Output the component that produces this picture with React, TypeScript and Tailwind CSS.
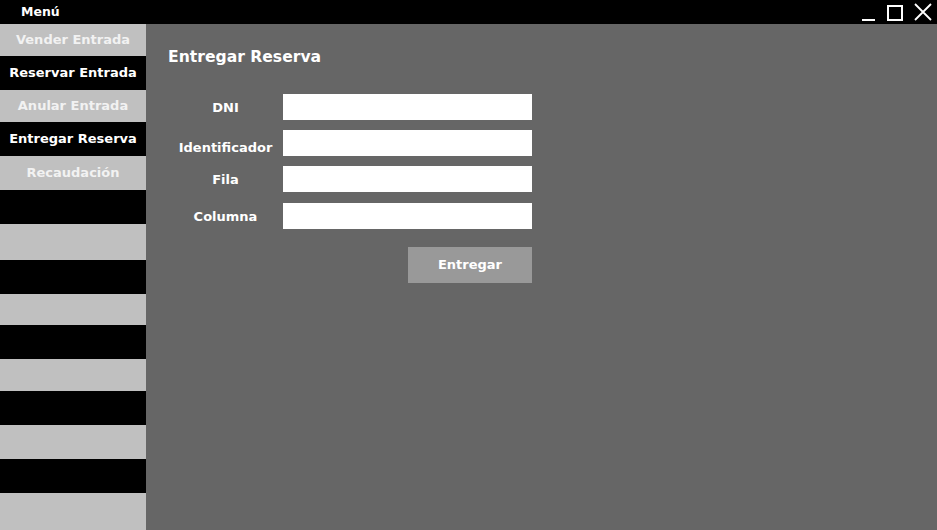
import React from "react";

const MENU = [
  { label: "Vender Entrada", h: "h-[32px]", dark: false },
  { label: "Reservar Entrada", h: "h-[34px]", dark: true },
  { label: "Anular Entrada", h: "h-[32px]", dark: false },
  { label: "Entregar Reserva", h: "h-[34px]", dark: true },
  { label: "Recaudación", h: "h-[34px]", dark: false },
  { label: "", h: "h-[34px]", dark: true },
  { label: "", h: "h-[36px]", dark: false },
  { label: "", h: "h-[34px]", dark: true },
  { label: "", h: "h-[31px]", dark: false },
  { label: "", h: "h-[34px]", dark: true },
  { label: "", h: "h-[32px]", dark: false },
  { label: "", h: "h-[34px]", dark: true },
  { label: "", h: "h-[34px]", dark: false },
  { label: "", h: "h-[34px]", dark: true },
];

const FIELDS = [
  { label: "DNI", gap: "mt-0", lbl: "translate-y-[1px]" },
  { label: "Identificador", gap: "mt-[10px]", lbl: "translate-y-[5px]" },
  { label: "Fila", gap: "mt-[10px]", lbl: "translate-y-[1px]" },
  { label: "Columna", gap: "mt-[11px]", lbl: "translate-y-[1px]" },
];

export default function App() {
  return (
    <div
      className="flex h-[530px] w-[937px] flex-col overflow-hidden bg-[#666666] text-white"
      style={{ fontFamily: '"DejaVu Sans", Verdana, sans-serif' }}
    >
      {/* title bar */}
      <div className="flex h-[24px] shrink-0 items-center bg-black">
        <span className="ml-[21px] text-[12.5px] font-bold">Menú</span>
        <div className="ml-auto flex items-center">
          <svg width="16" height="20" viewBox="0 0 16 20" className="mr-[11px]">
            <rect x="2" y="17" width="13" height="2" fill="white" />
          </svg>
          <svg width="16" height="18" viewBox="0 0 16 18" className="mr-[10px]">
            <rect x="1" y="3" width="14" height="14" fill="none" stroke="white" strokeWidth="2" />
          </svg>
          <svg width="20" height="20" viewBox="0 0 20 20" className="mr-[4px]">
            <path d="M2 2 L18 18 M18 2 L2 18" stroke="white" strokeWidth="1.8" />
          </svg>
        </div>
      </div>

      <div className="flex flex-1">
        {/* sidebar */}
        <div className="flex w-[146px] shrink-0 flex-col">
          {MENU.map((item, i) => (
            <div
              key={i}
              className={`flex ${item.h} items-center justify-center text-[13px] font-bold ${
                item.dark ? "bg-black text-white" : "bg-[#c0c0c0] text-[#f2f2f2]"
              }`}
            >
              {item.label}
            </div>
          ))}
          <div className="flex-1 bg-[#c0c0c0]" />
        </div>

        {/* content */}
        <div className="flex flex-col pl-[22px] pt-[22px]">
          <h1 className="text-[15.6px] font-bold leading-[22px]">Entregar Reserva</h1>

          <div className="mt-[26px] flex flex-col">
            {FIELDS.map((f) => (
              <div key={f.label} className={`flex h-[26px] items-center ${f.gap}`}>
                <div className={`w-[115px] text-center text-[13px] font-bold ${f.lbl}`}>
                  {f.label}
                </div>
                <div className="h-[26px] w-[249px] bg-white" />
              </div>
            ))}
          </div>

          <div className="mt-[18px] flex justify-end">
            <button className="h-[36px] w-[124px] bg-[#999999] text-[13px] font-bold text-white">
              Entregar
            </button>
          </div>
        </div>
      </div>
    </div>
  );
}
